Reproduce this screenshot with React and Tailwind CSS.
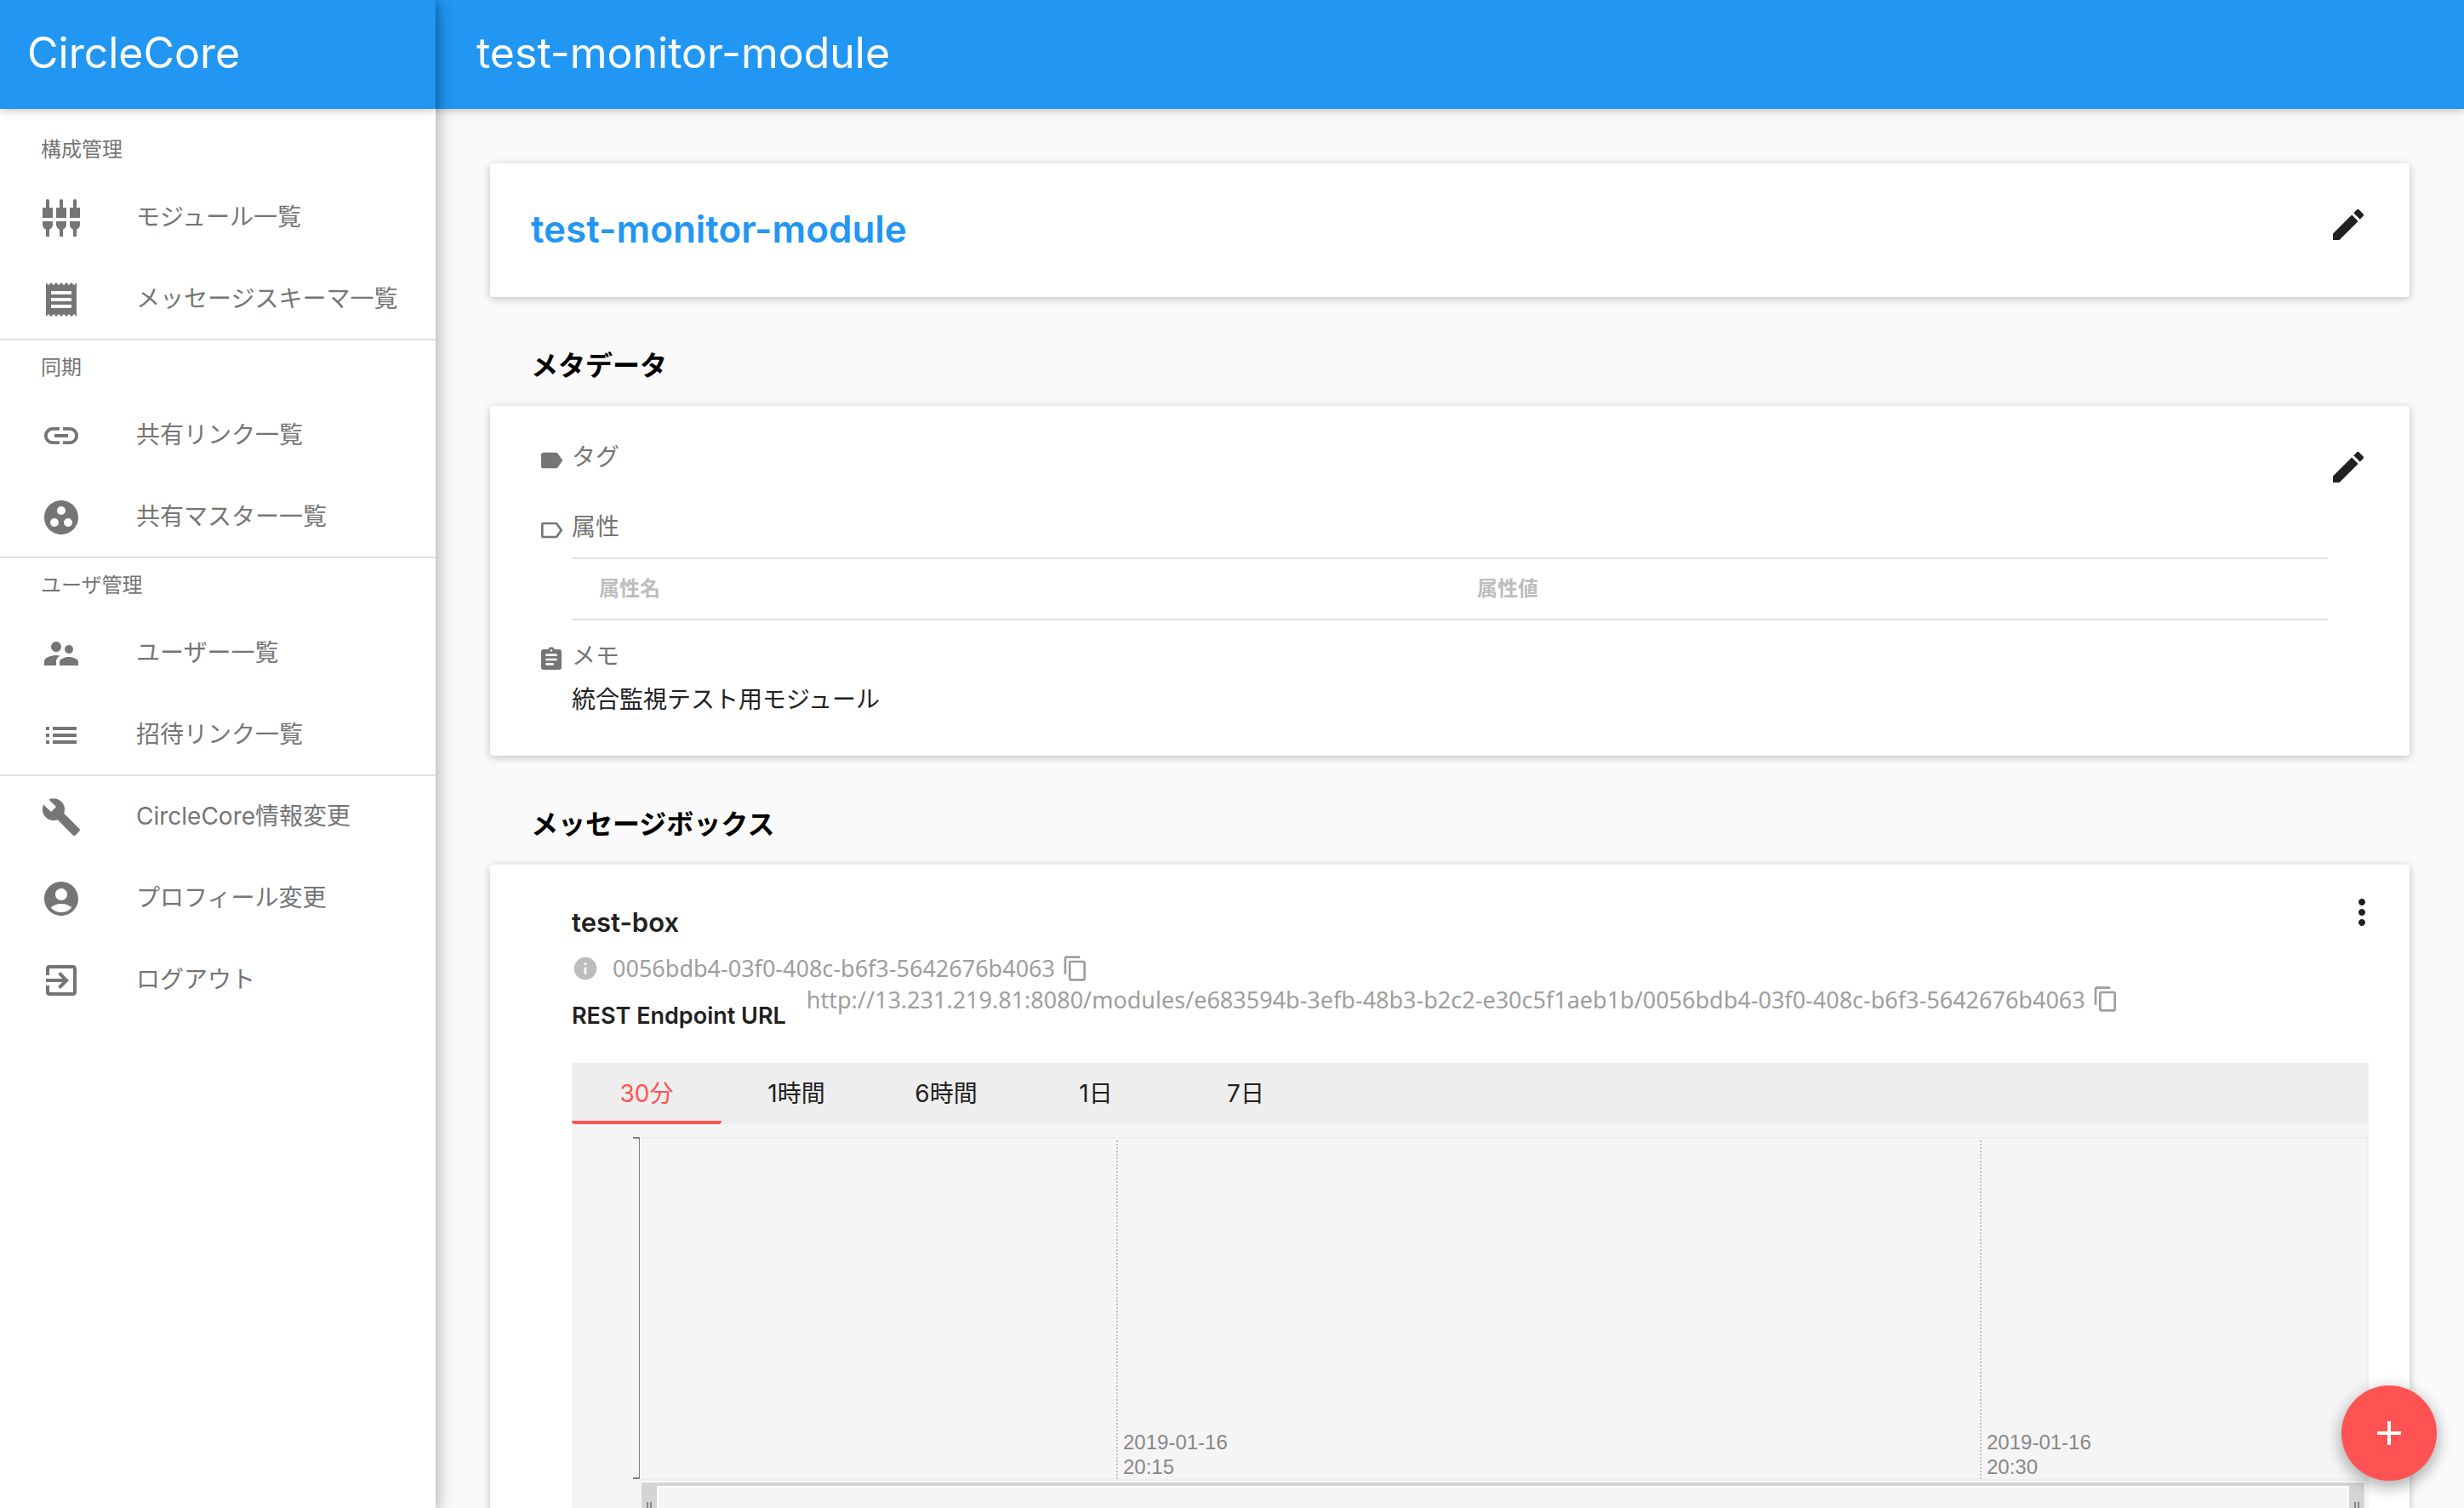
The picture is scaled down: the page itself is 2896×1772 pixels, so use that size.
import React, { useState } from "react";
import {
  MdSettingsInputComponent,
  MdReceipt,
  MdLink,
  MdGroupWork,
  MdSupervisorAccount,
  MdList,
  MdBuild,
  MdAccountCircle,
  MdExitToApp,
  MdEdit,
  MdLabel,
  MdLabelOutline,
  MdAssignment,
  MdMoreVert,
  MdInfo,
  MdContentCopy,
  MdAdd,
} from "react-icons/md";

const groups = [
  {
    title: "構成管理",
    items: [
      [MdSettingsInputComponent, "モジュール一覧"],
      [MdReceipt, "メッセージスキーマ一覧"],
    ],
  },
  {
    title: "同期",
    items: [
      [MdLink, "共有リンク一覧"],
      [MdGroupWork, "共有マスター一覧"],
    ],
  },
  {
    title: "ユーザ管理",
    items: [
      [MdSupervisorAccount, "ユーザー一覧"],
      [MdList, "招待リンク一覧"],
    ],
  },
  {
    items: [
      [MdBuild, "CircleCore情報変更"],
      [MdAccountCircle, "プロフィール変更"],
      [MdExitToApp, "ログアウト"],
    ],
  },
];

const ranges = ["30分", "1時間", "6時間", "1日", "7日"];

const barShadow = "shadow-[0_2px_12px_rgba(0,0,0,0.12),0_2px_8px_rgba(0,0,0,0.12)]";
const deepShadow = "shadow-[0_6px_20px_rgba(0,0,0,0.16),0_6px_20px_rgba(0,0,0,0.23)]";

function Sidebar() {
  return (
    <aside className={`relative z-20 flex w-[512px] shrink-0 flex-col bg-white ${deepShadow}`}>
      <div className={`flex h-32 shrink-0 items-center bg-[#2196f3] px-8 text-[50px] text-white ${barShadow}`}>
        <span className="pb-1">CircleCore</span>
      </div>
      <nav className="flex flex-col pt-4">
        {groups.map((group, i) => (
          <section
            key={i}
            className={i < groups.length - 1 ? "border-b-2 border-[#e0e0e0]" : ""}
          >
            {group.title && (
              <h2 className="h-16 px-12 text-2xl leading-[64px] text-[#757575]">{group.title}</h2>
            )}
            {group.items.map(([Icon, label], j) => (
              <a
                key={label}
                href="#"
                className={`flex items-center gap-16 px-12 text-[28px] text-[#757575] ${
                  i < groups.length - 1 && j === group.items.length - 1 ? "h-[94px] pt-0.5" : "h-24"
                }`}
              >
                <Icon className="size-12 shrink-0" />
                <span className="pb-0.5 whitespace-nowrap">{label}</span>
              </a>
            ))}
          </section>
        ))}
      </nav>
    </aside>
  );
}

function Card({ className = "", children }) {
  return (
    <section className={`relative rounded-[4px] bg-white p-12 ${barShadow} ${className}`}>
      {children}
    </section>
  );
}

function EditButton({ label }) {
  return (
    <button type="button" aria-label={label} className="size-12 shrink-0 text-[#212121]">
      <MdEdit className="size-12" />
    </button>
  );
}

function Field({ icon: Icon, label, className = "", children }) {
  return (
    <div className={`flex gap-2 ${className}`}>
      <Icon className="size-8 shrink-0 text-[#757575]" />
      <div className="min-w-0 flex-1">
        <h3 className="text-[28px] leading-6 text-[#757575]">{label}</h3>
        {children}
      </div>
    </div>
  );
}

function CopyButton({ label }) {
  return (
    <button type="button" aria-label={label} className="size-8 shrink-0 text-[#9e9e9e]">
      <MdContentCopy className="size-8" />
    </button>
  );
}

function TimeMark({ date, time }) {
  return (
    <div className="flex items-end">
      <svg className="h-full w-0.5 shrink-0" aria-hidden="true">
        <line x1="1" y1="2" x2="1" y2="100%" stroke="#c4c4c4" strokeWidth="2" strokeDasharray="2 2" />
      </svg>
      <p className="pl-1.5 font-['Liberation_Sans',Arial,sans-serif] text-2xl leading-[29px] whitespace-nowrap text-[#888888]">
        {date}
        <br />
        {time}
      </p>
    </div>
  );
}

function Grip() {
  return (
    <div className="flex h-20 w-[18px] justify-center gap-0.5 bg-[#d4d4d4] pt-[23px]">
      <span className="h-8 w-0.5 bg-[#888888]" />
      <span className="h-8 w-0.5 bg-[#888888]" />
    </div>
  );
}

function Chart() {
  return (
    <div className="bg-[#f5f5f5] pt-[15px] pl-[72px]">
      <div className="flex h-[404px]">
        <div className="h-[402px] w-2 border-y-2 border-r border-[#808080]" />
        <div className="grid flex-1 grid-cols-[560fr_1015fr_455fr] border-y-2 border-r-2 border-[#eeeeee]">
          <span />
          <TimeMark date="2019-01-16" time="20:15" />
          <TimeMark date="2019-01-16" time="20:30" />
        </div>
      </div>
      <div className="mt-px mr-1 ml-2.5 flex border-t border-r border-white">
        <Grip />
        <div className="flex-1 border-t-4 border-[#d4d4d4]">
          <div className="h-20 border-x-2 border-t-2 border-white" />
        </div>
        <Grip />
      </div>
    </div>
  );
}

function MessageBox() {
  const [active, setActive] = useState(0);
  return (
    <Card className="pl-24">
      <div className="flex items-start">
        <div className="min-w-0 flex-1 pt-0.5">
          <h3 className="text-[31px] leading-9 font-semibold text-[#212121]">test-box</h3>
          <div className="mt-5 flex h-8 items-center text-[#9e9e9e]">
            <MdInfo className="size-8 shrink-0 text-[#bdbdbd]" />
            <span className="ml-4 font-['Noto_Sans',sans-serif] text-[27px] leading-8">
              0056bdb4-03f0-408c-b6f3-5642676b4063
            </span>
            <span className="ml-2 flex"><CopyButton label="IDをコピー" /></span>
          </div>
          <div className="mt-1 flex gap-6">
            <h4 className="pt-5 text-[27px] leading-8 font-semibold whitespace-nowrap text-[#212121]">
              REST Endpoint URL
            </h4>
            <div className="flex h-8 items-center gap-2 whitespace-nowrap text-[#9e9e9e]">
              <span className="pt-0.5 font-['Noto_Sans',sans-serif] text-[27px] leading-8">
                http://13.231.219.81:8080/modules/e683594b-3efb-48b3-b2c2-e30c5f1aeb1b/0056bdb4-03f0-408c-b6f3-5642676b4063
              </span>
              <CopyButton label="URLをコピー" />
            </div>
          </div>
        </div>
        <button type="button" aria-label="メニュー" className="-mt-4 -mr-4 size-12 shrink-0 text-[#212121]">
          <MdMoreVert className="size-12" />
        </button>
      </div>
      <div className="mt-[39px]">
        <div role="tablist" className="flex h-[72px] bg-[#eeeeee]">
          {ranges.map((range, i) => (
            <button
              key={range}
              type="button"
              role="tab"
              aria-selected={i === active}
              onClick={() => setActive(i)}
              className={`w-44 rounded-b-[4px] border-b-4 pt-1 text-[28px] leading-9 ${
                i === active ? "border-[#ff5252] text-[#ff5252]" : "border-transparent text-[#212121]"
              }`}
            >
              {range}
            </button>
          ))}
        </div>
        <Chart />
      </div>
    </Card>
  );
}

export default function App() {
  return (
    <div className="flex h-screen overflow-hidden bg-[#fafafa] font-['Inter','Noto_Sans_CJK_JP',sans-serif] text-[#212121]">
      <Sidebar />
      <div className="flex min-w-0 flex-1 flex-col">
        <header className={`z-10 flex h-32 shrink-0 items-center bg-[#2196f3] px-12 text-[50px] text-white ${barShadow}`}>
          <h1 className="pb-1">test-monitor-module</h1>
        </header>
        <main className="flex min-h-0 flex-1 flex-col overflow-y-auto p-16 [scrollbar-width:none]">
          <Card className="flex h-[157px] shrink-0 justify-between">
            <h2 className="text-[44px] leading-[58px] font-semibold text-[#2196f3]">test-monitor-module</h2>
            <EditButton label="モジュール名を編集" />
          </Card>

          <h2 className="mt-14 px-12 pt-0.5 text-[32px] leading-[46px] font-semibold text-black">メタデータ</h2>
          <Card className="mt-6 flex shrink-0 pl-14">
            <div className="flex-1">
              <Field icon={MdLabel} label="タグ" />
              <Field icon={MdLabelOutline} label="属性" className="mt-[50px]">
                <table className="mt-6 w-full table-fixed border-y-2 border-[#e0e0e0] text-2xl">
                  <thead>
                    <tr>
                      <th className="h-[72px] px-8 text-left font-bold text-[#bdbdbd]">属性名</th>
                      <th className="h-[72px] px-8 text-left font-bold text-[#bdbdbd]">属性値</th>
                    </tr>
                  </thead>
                </table>
              </Field>
              <Field icon={MdAssignment} label="メモ" className="mt-[30px]">
                <p className="mt-[21px] text-[28px] leading-9">統合監視テスト用モジュール</p>
              </Field>
            </div>
            <EditButton label="メタデータを編集" />
          </Card>

          <h2 className="mt-14 px-12 pt-0.5 text-[32px] leading-[46px] font-semibold text-black">メッセージボックス</h2>
          <div className="mt-6 shrink-0">
            <MessageBox />
          </div>
        </main>
      </div>
      <button
        type="button"
        aria-label="追加"
        className={`fixed right-8 bottom-8 z-30 flex size-28 items-center justify-center rounded-full bg-[#ff5252] text-white ${deepShadow}`}
      >
        <MdAdd className="size-12" />
      </button>
    </div>
  );
}
